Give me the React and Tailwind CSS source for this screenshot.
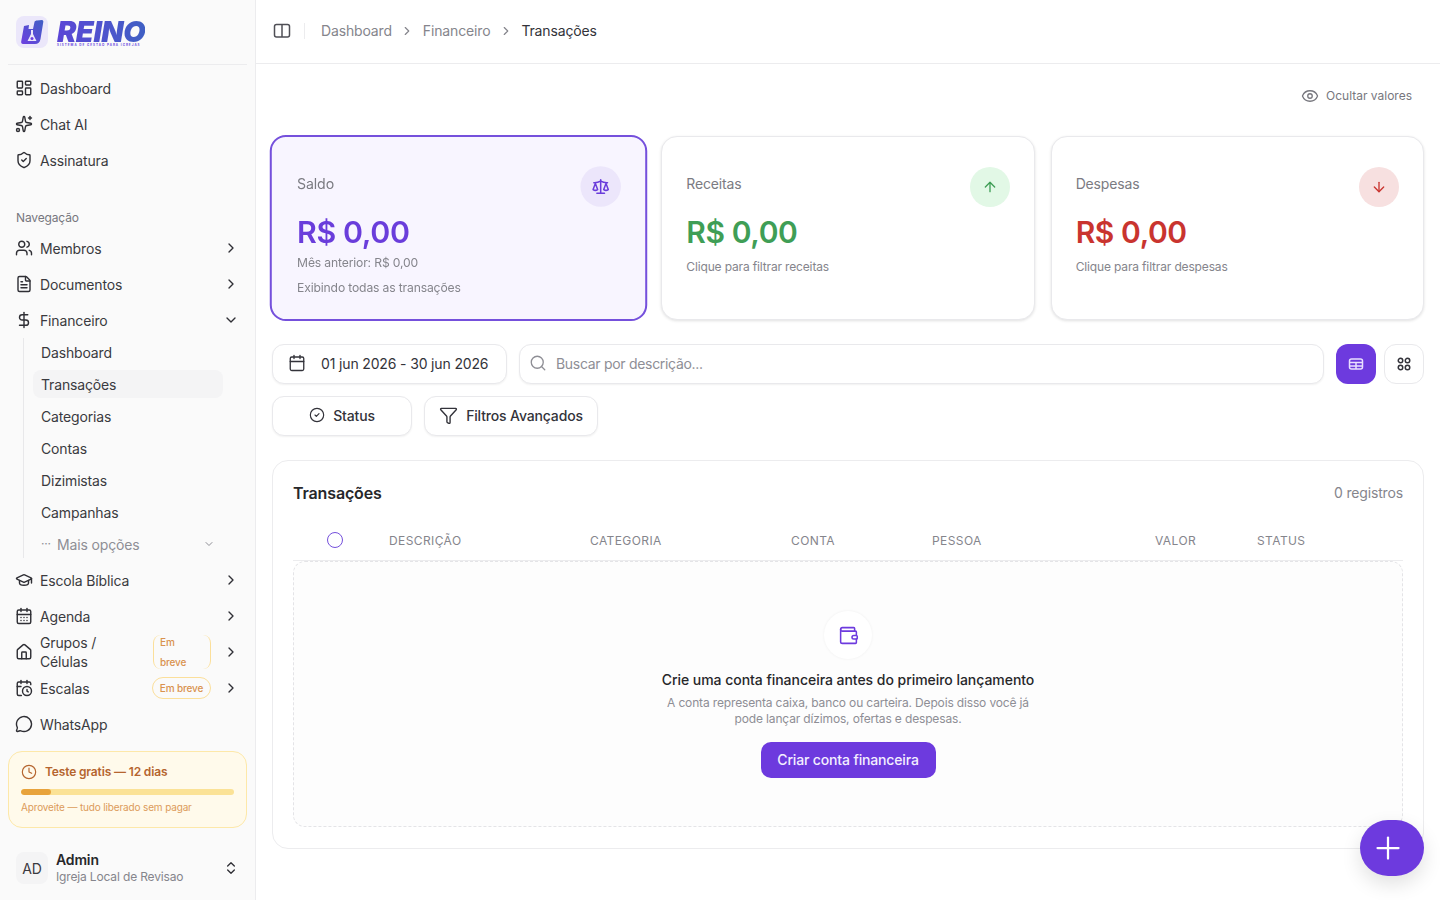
import {
  ArrowDown, ArrowUp, Calendar, CalendarClock, CalendarDays, ChevronDown, ChevronRight, ChevronsUpDown,
  CircleCheck, Clock, DollarSign, Eye, FileText, Funnel, GraduationCap, House, LayoutDashboard,
  MessageCircle, Plus, Scale, Search, ShieldCheck, Sparkles, Users, Wallet,
} from 'lucide-react';

const SUB_ITEMS = ['Dashboard', 'Transações', 'Categorias', 'Contas', 'Dizimistas', 'Campanhas'];

const COLUMNS = [
  { label: 'DESCRIÇÃO', width: 'w-[201px]' },
  { label: 'CATEGORIA', width: 'w-[201px]' },
  { label: 'CONTA', width: 'w-[141px]' },
  { label: 'PESSOA', width: 'w-[223px]' },
  { label: 'VALOR', width: 'w-[102px]' },
  { label: 'STATUS', width: 'w-[100px]' },
];

function Logo() {
  return (
    <div className="flex items-center gap-[9px] h-[65px] pl-2 mx-2 border-b border-[#ececee]">
      <div className="w-8 h-8 rounded-lg bg-[#ebe7fa] flex items-center justify-center">
        <svg viewBox="0 0 32 32" className="w-8 h-8">
          <defs>
            <linearGradient id="logoMark" x1="0" y1="1" x2="1" y2="0">
              <stop offset="0" stopColor="#6d3fe0" />
              <stop offset="1" stopColor="#3f5fc4" />
            </linearGradient>
          </defs>
          <path d="M8 10 L13 9 L12.5 13 L17 13 L18.5 6 C18.7 5 20 4.5 21 4.5 L26 4 C27 4 27.5 5 27.3 6 L24.5 23 C24 26.5 22 28 19 28 L7 28 C5.5 28 5 27 5.2 25.5 Z" fill="url(#logoMark)" />
          <path d="M15 14 L17 14 L17 18 L20.5 25 L11.5 25 L15 18 Z" fill="#ebe7fa" />
          <circle cx="16" cy="22.5" r="1.5" fill="#6d3fe0" />
        </svg>
      </div>
      <div className="flex flex-col pt-[3px]">
        <span className="italic font-black text-[29px] leading-[22px] tracking-[-0.5px] text-transparent bg-clip-text bg-gradient-to-r from-[#5b45d6] to-[#3f5fc4]">REINO</span>
        <span className="text-[3px] leading-[4px] tracking-[1px] font-bold text-[#6a4be0] whitespace-nowrap">SISTEMA DE GESTAO PARA IGREJAS</span>
      </div>
    </div>
  );
}

function NavItem({ icon: Icon, label, chevron, open, children }) {
  return (
    <div className="flex items-center h-9 pl-[15px] pr-[16px] text-[14px] text-[#3a3a40]">
      <Icon className="w-[18px] h-[18px] shrink-0 text-[#2f2f35]" strokeWidth={1.9} />
      <span className="ml-[7px] flex-1 leading-[19px]">{label}</span>
      {children}
      {chevron && (open
        ? <ChevronDown className="w-4 h-4 ml-3 text-[#2f2f35]" strokeWidth={2} />
        : <ChevronRight className="w-4 h-4 ml-3 text-[#2f2f35]" strokeWidth={2} />)}
    </div>
  );
}

function Sidebar() {
  return (
    <aside className="w-[256px] h-screen shrink-0 bg-[#fafafa] border-r border-[#ececee] flex flex-col">
      <Logo />
      <nav className="flex flex-col pt-[5px]">
        <NavItem icon={LayoutDashboard} label="Dashboard" />
        <NavItem icon={Sparkles} label="Chat AI" />
        <NavItem icon={ShieldCheck} label="Assinatura" />
        <div className="pl-4 pt-[29px] pb-[6px] h-[56px] flex items-center text-[12px] text-[#77777e]">Navegação</div>
        <div className="-mt-[4px]">
          <NavItem icon={Users} label="Membros" chevron />
          <NavItem icon={FileText} label="Documentos" chevron />
          <NavItem icon={DollarSign} label="Financeiro" chevron open />
        </div>
        <div className="ml-[23px] pl-[9px] border-l border-[#e8e8ea] w-[200px] flex flex-col gap-1">
          {SUB_ITEMS.map((item) => (
            <div key={item} className={`h-7 pl-2 flex items-center rounded-lg text-[14px] text-[#3a3a40] ${item === 'Transações' ? 'bg-[#f4f4f5]' : ''}`}>{item}</div>
          ))}
          <div className="h-7 pl-2 pr-1 flex items-center text-[14px] text-[#8e8e95]">
            <span className="text-[12px] w-4">···</span>
            <span className="flex-1">Mais opções</span>
            <ChevronDown className="w-3 h-3 mr-[4px]" />
          </div>
        </div>
        <div className="mt-[4px]">
          <NavItem icon={GraduationCap} label="Escola Bíblica" chevron />
          <NavItem icon={CalendarDays} label="Agenda" chevron />
          <NavItem icon={House} label={<>Grupos /<br />Células</>} chevron>
            <span className="w-[58px] h-[34px] px-[6px] rounded-[8px] border-x border-[#fbdf9a] flex items-center text-[10px] leading-[20px] font-medium text-[#d9924e]">
              <span>Em<br />breve</span>
            </span>
          </NavItem>
          <NavItem icon={CalendarClock} label="Escalas" chevron>
            <span className="w-[59px] h-[22px] text-center rounded-full border border-[#fbdf9a] text-[10px] leading-[20px] font-medium text-[#d9924e] whitespace-nowrap">Em breve</span>
          </NavItem>
          <NavItem icon={MessageCircle} label="WhatsApp" />
        </div>
      </nav>
      <div className="mx-2 mt-[9px] h-[77px] rounded-[14px] border border-[#fde8a9] bg-[#fffaeb] px-3 pt-[11px]">
        <div className="flex items-center gap-2 text-[12px] font-semibold text-[#b5652f]">
          <Clock className="w-4 h-4 text-[#b5652f]" strokeWidth={1.75} />
          Teste gratis — 12 dias
        </div>
        <div className="h-[6px] mt-2 rounded-full bg-[#fbe296] overflow-hidden">
          <div className="h-full w-[30px] rounded-full bg-[#e8a33c]" />
        </div>
        <p className="mt-[5px] text-[10px] leading-[14px] text-[#dc9a5a]">Aproveite — tudo liberado sem pagar</p>
      </div>
      <div className="flex items-center pl-4 pr-4 mt-[23px]">
        <div className="w-8 h-8 rounded-lg bg-[#f4f4f5] flex items-center justify-center text-[14px] text-[#3a3a40]">AD</div>
        <div className="ml-2 flex-1">
          <p className="text-[14px] leading-[17px] font-semibold text-[#27272a]">Admin</p>
          <p className="mt-[1px] text-[12px] leading-[16px] text-[#85858c]">Igreja Local de Revisao</p>
        </div>
        <ChevronsUpDown className="w-4 h-4 text-[#2f2f35]" />
      </div>
    </aside>
  );
}

function Header() {
  return (
    <header className="h-[64px] shrink-0 border-b border-[#ececee] flex items-center pl-[17px] pb-[2px] text-[14px]">
      <svg viewBox="0 0 18 18" className="w-[18px] h-[18px]" fill="none" stroke="#4f4f56" strokeWidth="1.5">
        <rect x="1.5" y="2.5" width="15" height="12.5" rx="2" />
        <line x1="9" y1="2.5" x2="9" y2="15" />
      </svg>
      <div className="w-px h-4 bg-[#ececee] ml-[13px] mr-4" />
      <span className="text-[#85858c]">Dashboard</span>
      <ChevronRight className="w-[14px] h-[14px] mx-[8.5px] text-[#85858c]" />
      <span className="text-[#85858c]">Financeiro</span>
      <ChevronRight className="w-[14px] h-[14px] mx-[8.5px] text-[#85858c]" />
      <span className="text-[#33333a]">Transações</span>
    </header>
  );
}

function StatCard({ title, color, circle, icon: Icon, iconSize, active, lines }) {
  return (
    <div className={`h-[184px] rounded-2xl ${active ? 'pl-[25px] pr-6 pt-[29px] border-2 border-[#7550dc] bg-[#f8f5ff] scale-[1.012]' : 'px-6 pt-[30px] border border-[#e9e9ec] bg-white shadow-[0_1px_3px_rgba(0,0,0,0.12)]'}`}>
      <div className="flex justify-between items-start">
        <span className="mt-[7px] text-[14px] leading-5 text-[#7b7b82]">{title}</span>
        <div className={`w-10 h-10 rounded-full flex items-center justify-center ${circle}`}>
          <Icon className={`${iconSize} ${color}`} strokeWidth={2} />
        </div>
      </div>
      <p className={`mt-[7px] text-[30px] leading-9 font-semibold tracking-[-0.4px] ${color}`}>R$ 0,00</p>
      {lines.map((line, i) => (
        <p key={line} className={`text-[12px] leading-4 text-[#85858c] ${lines.length > 1 ? (i === 0 ? 'mt-[5px]' : 'mt-[8px]') : 'mt-[9px]'}`}>{line}</p>
      ))}
    </div>
  );
}

function Filters() {
  const box = 'h-10 rounded-xl border border-[#e9e9ec] bg-white shadow-[0_1px_2px_rgba(0,0,0,0.06)] flex items-center pb-[2px] text-[14px]';
  return (
    <div className="mt-6 flex flex-col gap-3">
      <div className="flex gap-3">
        <div className={`${box} w-[235px] pl-[15px] text-[#33333a]`}>
          <Calendar className="w-[18px] h-[18px] mr-[15px]" strokeWidth={1.75} />
          01 jun 2026 - 30 jun 2026
        </div>
        <div className={`${box} flex-1 pl-[9px] text-[#8e8e95] tracking-[-0.3px]`}>
          <Search className="w-[18px] h-[18px] mr-[9px]" strokeWidth={1.75} />
          Buscar por descrição...
        </div>
        <div className="flex gap-2">
          <div className="w-10 h-10 rounded-xl bg-[#6d3ade] flex items-center justify-center">
            <svg viewBox="0 0 16 16" className="w-4 h-4" fill="none" stroke="#e9dfff" strokeWidth="1.5">
              <rect x="1.5" y="3" width="13" height="10" rx="2" />
              <line x1="1.5" y1="6.5" x2="14.5" y2="6.5" />
              <line x1="1.5" y1="10" x2="14.5" y2="10" />
              <line x1="8" y1="6.5" x2="8" y2="13" />
            </svg>
          </div>
          <div className="w-10 h-10 rounded-xl border border-[#e9e9ec] bg-white flex items-center justify-center">
            <svg viewBox="0 0 16 16" className="w-4 h-4" fill="none" stroke="#33333a" strokeWidth="1.5">
              <circle cx="4.5" cy="4.5" r="2.25" />
              <circle cx="11.5" cy="4.5" r="2.25" />
              <circle cx="4.5" cy="11.5" r="2.25" />
              <circle cx="11.5" cy="11.5" r="2.25" />
            </svg>
          </div>
        </div>
      </div>
      <div className="flex gap-3 text-[#33333a]">
        <div className={`${box} w-[140px] justify-center gap-2 font-medium`}>
          <CircleCheck className="w-4 h-4" strokeWidth={1.75} />
          Status
        </div>
        <div className={`${box} w-[174px] justify-center gap-2 font-medium`}>
          <Funnel className="w-[19px] h-[19px]" strokeWidth={1.75} />
          Filtros Avançados
        </div>
      </div>
    </div>
  );
}

function TransactionsCard() {
  return (
    <section className="mt-6 h-[389px] rounded-2xl border border-[#ececee] bg-white px-5">
      <div className="flex items-start justify-between pt-5 h-[65px]">
        <h2 className="text-[16px] leading-6 font-semibold text-[#27272a]">Transações</h2>
        <span className="text-[14px] leading-6 text-[#85858c]">0 registros</span>
      </div>
      <div className="flex items-center h-[35px] pb-[5px] border-b border-[#ececee]">
        <div className="w-[96px] pl-[34px]">
          <div className="w-4 h-4 -mt-[2px] rounded-full border border-[#7550dc]" />
        </div>
        {COLUMNS.map((col) => (
          <span key={col.label} className={`${col.width} text-[12px] tracking-[0.4px] text-[#85858c]`}>{col.label}</span>
        ))}
      </div>
      <div className="h-[266px] rounded-xl border border-dashed border-[#e4e4e7] bg-[#fdfdfd] flex flex-col items-center pt-[49px]">
        <div className="w-12 h-12 rounded-full bg-white shadow-[0_0_3px_rgba(0,0,0,0.06)] flex items-center justify-center">
          <Wallet className="w-[21px] h-[21px] text-[#6d3ade]" strokeWidth={1.75} />
        </div>
        <h3 className="mt-[11px] text-[14px] leading-5 font-medium tracking-[-0.04px] text-[#27272a]">Crie uma conta financeira antes do primeiro lançamento</h3>
        <p className="mt-[5px] w-[380px] text-center text-[12px] leading-4 text-[#8e8e95]">A conta representa caixa, banco ou carteira. Depois disso você já pode lançar dízimos, ofertas e despesas.</p>
        <button className="mt-[15px] w-[175px] h-9 pb-[1px] rounded-[10px] bg-[#6d3ade] text-[14px] font-medium text-[#f3eeff]">Criar conta financeira</button>
      </div>
    </section>
  );
}

export default function App() {
  return (
    <div className="h-screen overflow-hidden flex bg-white [font-family:Inter,sans-serif] tracking-[-0.15px]">
      <Sidebar />
      <main className="flex-1 flex flex-col min-w-0 relative">
        <Header />
        <div className="px-4">
          <div className="h-[72px] flex items-center justify-end pr-3 pb-[8px] gap-[7px] text-[12px] tracking-normal text-[#77777e]">
            <Eye className="w-[18px] h-[18px]" strokeWidth={1.75} />
            Ocultar valores
          </div>
          <div className="grid grid-cols-3 gap-4">
            <StatCard active title="Saldo" color="text-[#6a3ddb]" circle="bg-[#ece6fb]" icon={Scale} iconSize="w-[18px] h-[18px]" lines={['Mês anterior: R$ 0,00', 'Exibindo todas as transações']} />
            <StatCard title="Receitas" color="text-[#3f9e56]" circle="bg-[#e2f8e6]" icon={ArrowUp} iconSize="w-4 h-4" lines={['Clique para filtrar receitas']} />
            <StatCard title="Despesas" color="text-[#c9342f]" circle="bg-[#f7e0e0]" icon={ArrowDown} iconSize="w-4 h-4" lines={['Clique para filtrar despesas']} />
          </div>
          <Filters />
          <TransactionsCard />
        </div>
        <button className="absolute right-4 top-[820px] w-16 h-14 pr-[9px] rounded-full bg-[#6d3ade] shadow-[0_8px_20px_rgba(0,0,0,0.12)] flex items-center justify-center">
          <Plus className="w-9 h-9 text-white" strokeWidth={1.5} />
        </button>
      </main>
    </div>
  );
}
